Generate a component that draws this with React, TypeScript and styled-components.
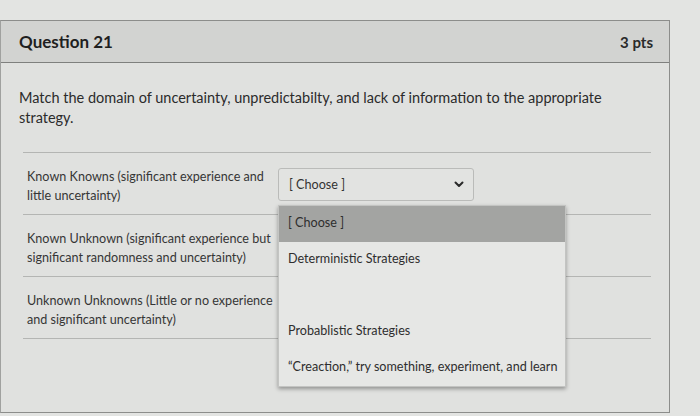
import React from "react"
import styled, { createGlobalStyle } from "styled-components"

const GlobalStyle = createGlobalStyle`
  html, body {
    margin: 0;
    padding: 0;
    background: #e3e4e2;
    font-family: Lato, "Liberation Sans", sans-serif;
  }
`

const Page = styled.div`
  width: 700px;
  height: 416px;
  padding-top: 20px;
  box-sizing: border-box;
  overflow: hidden;
  background: #e3e4e2;
`

const Card = styled.div`
  width: 670px;
  height: 393px;
  box-sizing: border-box;
  border: 1px solid #8c8d8b;
  border-left-color: #a0a19f;
  background: #e0e1df;
`

const Header = styled.div`
  height: 41px;
  display: flex;
  align-items: center;
  justify-content: space-between;
  padding: 0 16px 0 18px;
  background: #d2d3d1;
  border-bottom: 1px solid #7f807e;
`

const Title = styled.h2`
  margin: 0;
  font-size: 17px;
  font-weight: 700;
  color: #1f1f1f;
`

const Points = styled.span`
  font-size: 15px;
  font-weight: 700;
  color: #2a2a2a;
`

const Body = styled.div`
  padding: 25px 18px 0;
`

const Prompt = styled.p`
  margin: 0;
  font-size: 14.5px;
  line-height: 20px;
  color: #2b2b2b;
`

const MatchTable = styled.div`
  margin: 24px 0 0 4px;
  width: 628px;
  border-bottom: 1px solid #b4b5b3;
`

const MatchRow = styled.div`
  display: flex;
  align-items: flex-start;
  padding: 14px 0 0 4px;
  height: 47px;
  border-top: 1px solid #b4b5b3;
`

const Label = styled.div`
  width: 251px;
  flex-shrink: 0;
  font-size: 12.6px;
  line-height: 19px;
  color: #363636;
`

const SelectWrap = styled.div`
  position: relative;
  margin-top: 1px;
`

const Select = styled.div`
  width: 196px;
  height: 33px;
  box-sizing: border-box;
  display: flex;
  align-items: center;
  justify-content: space-between;
  padding: 0 9px 0 10px;
  border: 1px solid #babbb9;
  border-radius: 3px;
  background: #e2e3e1;
  font-size: 12.6px;
  color: #333;
`

const Menu = styled.ul`
  position: absolute;
  top: 37px;
  left: 0;
  z-index: 2;
  width: 286px;
  margin: 0;
  padding: 0;
  list-style: none;
  background: #e6e7e5;
  border: 1px solid #c3c4c2;
  box-shadow: 0 2px 4px rgba(0, 0, 0, 0.35);
`

const Option = styled.li<{ $active?: boolean }>`
  height: 36px;
  box-sizing: border-box;
  display: flex;
  align-items: center;
  padding: 0 9px 3px;
  font-size: 12.6px;
  white-space: nowrap;
  color: #2e2e2e;
  background: ${(p) => (p.$active ? "#a3a4a2" : "transparent")};
`

const Chevron = () => (
  <svg width="10" height="7" viewBox="0 0 10 7">
    <polyline
      points="1.5,1.5 5,5 8.5,1.5"
      fill="none"
      stroke="#2a2a2a"
      strokeWidth="2"
      strokeLinecap="round"
      strokeLinejoin="round"
    />
  </svg>
)

const rows = [
  "Known Knowns (significant experience and little uncertainty)",
  "Known Unknown (significant experience but significant randomness and uncertainty)",
  "Unknown Unknowns (Little or no experience and significant uncertainty)",
]

const options = [
  "[ Choose ]",
  "Deterministic Strategies",
  "",
  "Probablistic Strategies",
  "\u201cCreaction,\u201d try something, experiment, and learn",
]

export default function App() {
  return (
    <Page>
      <GlobalStyle />
      <Card>
        <Header>
          <Title>Question 21</Title>
          <Points>3 pts</Points>
        </Header>
        <Body>
          <Prompt>
            Match the domain of uncertainty, unpredictabilty, and lack of information to the
            appropriate strategy.
          </Prompt>
          <MatchTable>
            {rows.map((text, i) => (
              <MatchRow key={i}>
                <Label>{text}</Label>
                <SelectWrap>
                  <Select>
                    <span>[ Choose ]</span>
                    <Chevron />
                  </Select>
                  {i === 0 && (
                    <Menu>
                      {options.map((o, j) => (
                        <Option key={j} $active={j === 0}>
                          {o}
                        </Option>
                      ))}
                    </Menu>
                  )}
                </SelectWrap>
              </MatchRow>
            ))}
          </MatchTable>
        </Body>
      </Card>
    </Page>
  )
}
